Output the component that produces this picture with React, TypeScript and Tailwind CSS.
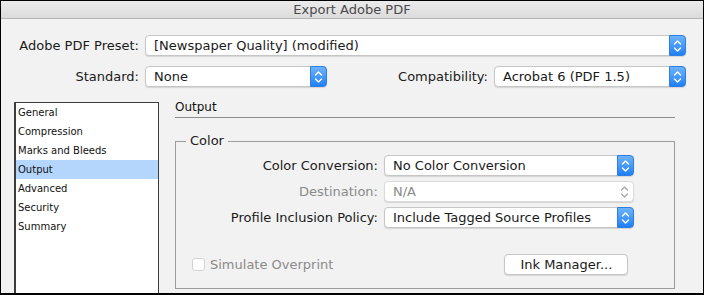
import type { ReactNode } from 'react';

const FONT = { fontFamily: '"DejaVu Sans", "Noto Sans", sans-serif' };

function Chevrons({ disabled }: { disabled?: boolean }) {
  const c = disabled ? '#a8a8a8' : '#ffffff';
  return (
    <svg width="9" height="14" viewBox="0 0 9 14" fill="none">
      <path d="M1.5 5 L4.5 2 L7.5 5" stroke={c} strokeWidth="1.4" strokeLinecap="round" strokeLinejoin="round" />
      <path d="M1.5 9 L4.5 12 L7.5 9" stroke={c} strokeWidth="1.4" strokeLinecap="round" strokeLinejoin="round" />
    </svg>
  );
}

function Select({ value, width, disabled }: { value: string; width: string; disabled?: boolean }) {
  return (
    <div
      className={`${width} h-[21px] flex items-stretch rounded-[4px] bg-white border ${disabled ? 'border-[#dadada]' : 'border-[#c6c6c6]'} shadow-[0_1px_1px_rgba(0,0,0,0.12)]`}
    >
      <span className={`flex-1 pl-[8px] flex items-center text-[13px] leading-none ${disabled ? 'text-[#8a8a8a]' : 'text-[#1a1a1a]'}`}>
        {value}
      </span>
      {disabled ? (
        <span className="w-[17px] flex items-center justify-center">
          <Chevrons disabled />
        </span>
      ) : (
        <span className="w-[17px] -my-px -mr-px flex items-center justify-center rounded-r-[4px] bg-gradient-to-b from-[#6db3fb] to-[#1c7ff8] border border-[#2f7fe0]">
          <Chevrons />
        </span>
      )}
    </div>
  );
}

function Row({ label, children, labelW, dim }: { label: string; children: ReactNode; labelW: string; dim?: boolean }) {
  return (
    <div className="flex items-center">
      <span className={`${labelW} shrink-0 text-right pr-[6px] text-[13px] ${dim ? 'text-[#8a8a8a]' : 'text-[#1a1a1a]'}`}>{label}</span>
      {children}
    </div>
  );
}

const SECTIONS = ['General', 'Compression', 'Marks and Bleeds', 'Output', 'Advanced', 'Security', 'Summary'];

export default function App() {
  return (
    <div className="w-[704px] h-[295px] bg-black px-px pt-px pb-[2px] overflow-hidden" style={FONT}>
      <div className="h-full flex flex-col bg-[#f2f2f2]">
        {/* window title */}
        <div className="h-[18px] shrink-0 flex items-center justify-center bg-gradient-to-b from-[#ebebeb] to-[#dcdcdc] border-b border-[#b4b4b4] text-[13px] text-[#4a4a4a]">
          Export Adobe PDF
        </div>

        {/* preset rows */}
        <div className="mt-[16px]">
          <Row label="Adobe PDF Preset:" labelW="w-[144px]">
            <Select value="[Newspaper Quality] (modified)" width="w-[541px]" />
          </Row>
        </div>
        <div className="mt-[10px] flex items-center">
          <Row label="Standard:" labelW="w-[144px]">
            <Select value="None" width="w-[182px]" />
          </Row>
          <div className="flex-1 flex items-center justify-end pr-[17px]">
            <span className="text-[13px] text-[#1a1a1a] pr-[6px]">Compatibility:</span>
            <Select value="Acrobat 6 (PDF 1.5)" width="w-[192px]" />
          </div>
        </div>

        {/* lower area */}
        <div className="mt-[15px] flex flex-1 min-h-0">
          <div className="ml-[13px] w-[145px] bg-white border border-[#3c3c3c] border-l-2 border-b-0 flex flex-col text-[10px] text-[#111]">
            {SECTIONS.map((s) => (
              <div key={s} className={`h-[19px] shrink-0 flex items-center pl-[2px] ${s === 'Output' ? 'bg-[#b4d6fd]' : ''}`}>
                {s}
              </div>
            ))}
          </div>

          <div className="ml-[16px] w-[500px] flex flex-col">
            <div className="h-[16px] flex items-end pb-[1px] border-b border-[#8c8c8c] text-[12px] text-[#111]">Output</div>

            <fieldset className="mt-[15px] h-[156px] border border-[#9c9c9c] px-0">
              <legend className="ml-[10px] px-[4px] text-[13px] text-[#1a1a1a] leading-[16px]">Color</legend>
              <div className="mt-[6px] flex flex-col gap-[5px]">
                <Row label="Color Conversion:" labelW="w-[208px]">
                  <Select value="No Color Conversion" width="w-[250px]" />
                </Row>
                <Row label="Destination:" labelW="w-[208px]" dim>
                  <Select value="N/A" width="w-[250px]" disabled />
                </Row>
                <Row label="Profile Inclusion Policy:" labelW="w-[208px]">
                  <Select value="Include Tagged Source Profiles" width="w-[250px]" />
                </Row>
              </div>
              <div className="mt-[26px] flex items-center">
                <span className="ml-[16px] w-[13px] h-[13px] rounded-[3px] border border-[#d4d4d4] bg-white" />
                <span className="ml-[5px] text-[13px] text-[#8a8a8a]">Simulate Overprint</span>
                <button className="ml-[171px] w-[124px] h-[21px] rounded-[4px] bg-white border border-[#c6c6c6] shadow-[0_1px_1px_rgba(0,0,0,0.12)] text-[13px] text-[#1a1a1a]">
                  Ink Manager...
                </button>
              </div>
            </fieldset>
          </div>
        </div>
      </div>
    </div>
  );
}
